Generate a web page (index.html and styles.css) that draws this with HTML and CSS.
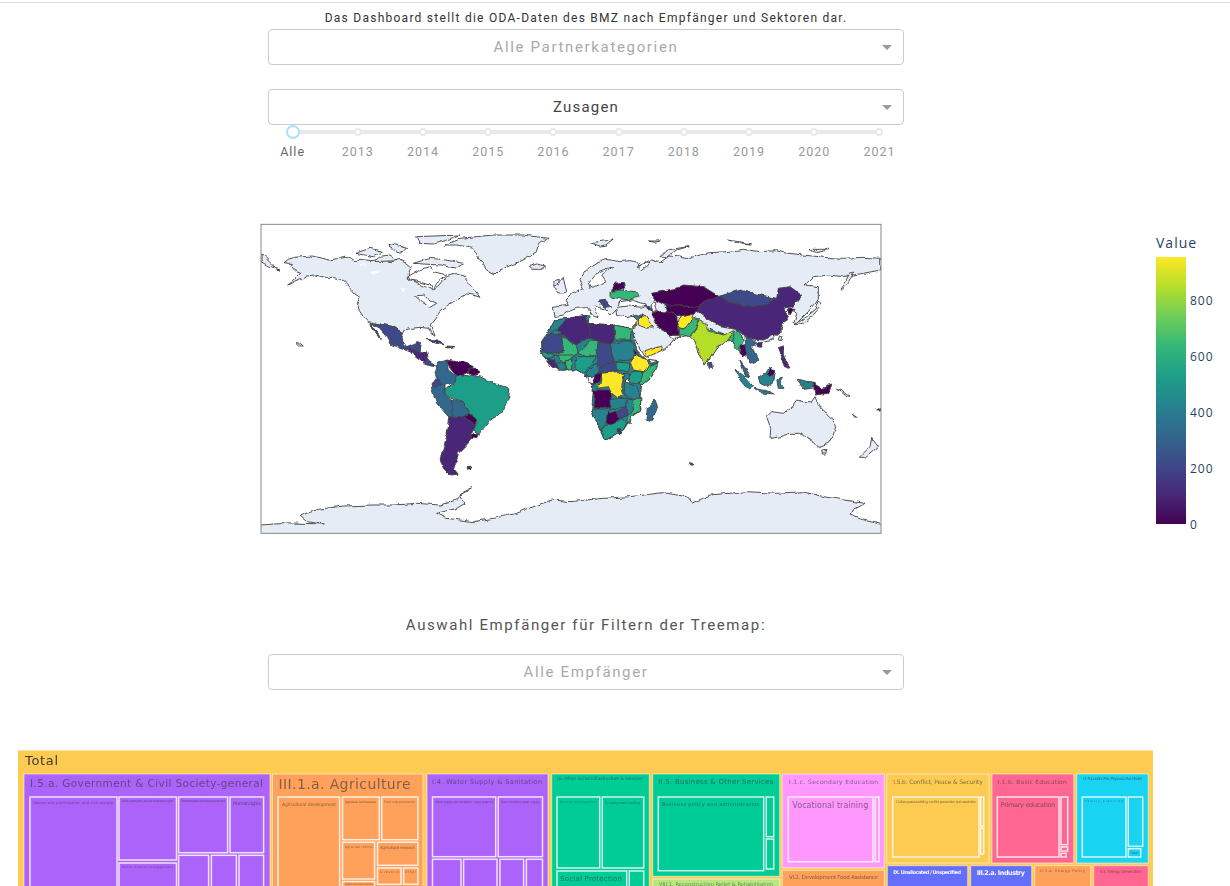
FILE: index.html
```html
<!DOCTYPE html>
<html>
<head>
    <title>ODA Dashboard</title>
    <link rel="stylesheet" href="styles.css">
</head>
<body>
    <div class="topline"></div>

    <div class="controls">
        <p class="intro">Das Dashboard stellt die ODA-Daten des BMZ nach Empfänger und Sektoren dar.</p>
        <div class="dropdown placeholder">Alle Partnerkategorien<span class="arrow"></span></div>
        <div class="dropdown">Zusagen<span class="arrow"></span></div>
    </div>

    <div class="slider">
        <div class="track"></div>
        <div class="mark active"><span class="dot"></span>Alle</div>
        <div class="mark"><span class="dot"></span>2013</div>
        <div class="mark"><span class="dot"></span>2014</div>
        <div class="mark"><span class="dot"></span>2015</div>
        <div class="mark"><span class="dot"></span>2016</div>
        <div class="mark"><span class="dot"></span>2017</div>
        <div class="mark"><span class="dot"></span>2018</div>
        <div class="mark"><span class="dot"></span>2019</div>
        <div class="mark"><span class="dot"></span>2020</div>
        <div class="mark"><span class="dot"></span>2021</div>
    </div>

    <div class="graph">
        <svg class="map" width="630" height="320" viewBox="0 0 1890 960">
            <defs>
                <clipPath id="frame"><rect x="3" y="13" width="1860" height="927"/></clipPath>
                <!-- roughens the hand drawn outlines into coastlines -->
                <filter id="coast" x="0" y="0" width="100%" height="100%" filterUnits="objectBoundingBox">
                    <feTurbulence type="fractalNoise" baseFrequency="0.04" numOctaves="3" seed="4"/>
                    <feDisplacementMap in="SourceGraphic" scale="13" xChannelSelector="R" yChannelSelector="G"/>
                    <feGaussianBlur stdDeviation="0.8"/>
                </filter>
            </defs>
            <g clip-path="url(#frame)">
            <g filter="url(#coast)">
                <rect class="sea-flat" x="0" y="0" width="1890" height="960"/>
                <!-- Eurasia, Australia and islands -->
                <g transform="translate(930 0)">
                    <polygon class="land" points="-45,290 -50,262 -5,256 -15,240 5,220 40,205 30,178 45,155 60,140 85,125 110,118 150,125 180,122 210,128 200,140 235,125 245,120 270,128 300,105 330,108 360,115 390,105 420,98 470,95 520,88 570,95 620,92 640,98 700,105 760,112 820,115 880,112 932,115 932,150 880,160 820,170 775,165 730,170 705,195 745,200 745,235 730,255 715,275 680,310 672,310 680,280 660,265 640,290 635,330 605,360 570,370 545,378 520,380 480,340 460,370 435,385 415,420 405,435 385,390 375,365 360,345 335,350 310,360 290,385 255,395 225,410 205,375 190,345 185,320 215,290 200,283 170,290 140,287 138,268 120,285 105,270 80,255 75,262 85,290 70,285 50,260 20,262 0,270 -20,285"/>
                    <polygon class="sea" points="140,262 150,245 185,240 225,252 222,262 175,258"/>
                    <polygon class="sea" points="243,255 255,245 262,275 248,278"/>
                    <polygon class="sea" points="55,190 85,155 125,140 95,165 110,185 90,192 60,205"/>
                    <polygon class="sea" points="205,140 240,125 230,140 215,150"/>
                    <polygon class="sea" points="262,322 285,335 312,358 330,348 300,345 270,318"/>
                    <polygon class="land" points="590,590 605,575 640,580 665,560 680,540 700,545 725,545 735,530 745,555 760,570 785,595 797,620 790,645 775,670 745,680 725,660 710,650 685,640 660,640 630,650 600,655 602,625"/>
                    <polygon class="land" points="755,690 770,688 767,702 757,702"/>
                    <polygon class="land" points="905,655 925,680 885,715 865,715 900,680"/>
                    <polygon class="land" points="810,210 840,160 852,155 835,190"/>
                    <polygon class="land" points="675,315 710,290 735,270 745,240 755,255 730,285 700,310"/>
                    <polygon class="land" points="60,68 130,60 110,75 90,78"/>
                    <polygon class="land" points="235,60 268,60 250,64"/>
                    <polygon class="land" points="270,110 290,90 355,80 320,90 290,110"/>
                    <polygon class="land" points="475,60 545,72 500,68"/>
                    <polygon class="land" points="715,88 780,88 740,98"/>
                    <polygon class="v0" points="125,212 135,190 160,187 165,205 150,210"/>
                    <polygon class="v6" points="120,215 150,210 200,215 210,230 175,240 140,235 120,230"/>
                    <polygon class="v2" points="85,240 105,238 125,262 105,265"/>
                    <polygon class="v0" points="245,220 320,205 340,195 400,200 445,228 430,240 395,250 370,262 330,255 285,255 255,240"/>
                    <polygon class="v2" points="450,228 510,210 550,220 620,235 590,255 535,260 470,245"/>
                    <polygon class="v1" points="395,250 450,228 470,245 535,260 590,255 620,235 625,205 660,200 695,225 665,260 640,265 655,290 635,320 625,340 580,360 530,355 510,330 450,320 410,295 370,265"/>
                    <polygon class="v0" points="655,265 672,265 660,285"/>
                    <polygon class="v0" points="285,255 330,255 370,262 395,250 370,285 340,295 320,285 290,275"/>
                    <polygon class="v1" points="225,255 243,262 248,272 230,268"/>
                    <polygon class="v0" points="245,285 265,275 290,275 320,285 325,345 300,345 265,320"/>
                    <polygon class="v9" points="320,310 335,290 370,282 365,300 345,325 325,320"/>
                    <polygon class="v6" points="325,345 325,320 345,325 370,295 385,300 375,335 360,350 340,345"/>
                    <polygon class="v6" points="470,345 497,335 505,385 485,365 475,365"/>
                    <polygon class="v8" points="385,298 410,310 415,330 460,345 475,340 495,330 470,365 440,380 415,420 405,435 385,390 375,365 360,350 375,335"/>
                    <polygon class="v6" points="420,325 462,342 430,338"/>
                    <polygon class="v6" points="495,335 510,330 520,365 510,380 515,400 500,385 485,365"/>
                    <polygon class="v0" points="510,375 530,375 540,400 520,410 510,400"/>
                    <polygon class="v3" points="525,350 560,365 545,380 565,420 540,430 530,395"/>
                    <polygon class="v3" points="510,420 525,440 540,470 525,465"/>
                    <polygon class="v2" points="415,428 425,430 427,445 417,445"/>
                    <polygon class="v1" points="560,368 578,368 572,382 562,380"/>
                    <polygon class="v1" points="625,385 640,380 640,400 650,430 657,445 640,440 635,410"/>
                    <polygon class="land" points="628,345 636,348 632,362 625,360"/>
                    <polygon class="v4" points="495,448 525,470 550,500 535,510 510,480"/>
                    <polygon class="v4" points="550,505 590,512 612,522 570,518"/>
                    <polygon class="v4" points="565,470 600,445 615,460 610,490 590,500 570,490"/>
                    <polygon class="v0" points="590,460 605,445 617,458 600,470"/>
                    <polygon class="v4" points="620,480 640,475 632,490 642,505 625,505"/>
                    <polygon class="v4" points="680,480 730,490 735,500 700,505"/>
                    <polygon class="v0" points="730,490 755,505 785,495 775,520 735,525"/>
                    <polygon class="land" points="800,505 815,510 842,530 825,525"/>
                    <polygon class="land" points="850,580 865,590 860,592"/>
                    <polygon class="v2" points="920,570 932,562 932,570"/>
                    <polygon class="v3" points="255,540 263,560 245,605 228,600 232,565"/>
                    <polygon class="v2" points="358,728 368,730 366,736 358,734"/>
                </g>

                <!-- Africa, Arabia and the British Isles -->
                <g transform="translate(810 150)">
                    <polygon class="land" points="75,50 100,25 110,65 100,70 82,68"/>
                    <polygon class="land" points="72,32 88,28 84,46 72,46"/>
                    <polygon class="v4" points="75,150 115,145 170,135 180,135 178,160 250,165 305,175 320,240 350,270 385,272 365,320 335,345 330,385 333,420 305,440 290,465 280,480 250,500 222,507 210,480 185,420 190,360 170,320 160,310 140,300 85,300 65,290 35,250 35,215 55,185"/>
                    <polygon class="v4" points="35,215 55,185 75,150 115,145 80,180 60,190"/>
                    <polygon class="v1" points="80,180 115,145 170,135 175,165 180,200 140,225 95,195"/>
                    <polygon class="v5" points="165,135 180,135 175,160"/>
                    <polygon class="v1" points="175,160 250,165 252,210 240,222 180,205"/>
                    <polygon class="v6" points="252,165 305,175 300,210 255,210"/>
                    <polygon class="v2" points="35,215 60,190 95,195 100,245 60,250 42,245"/>
                    <polygon class="v6" points="95,200 140,228 145,250 110,265 75,255 100,245"/>
                    <polygon class="v6" points="145,250 180,210 205,212 200,255 170,260"/>
                    <polygon class="v2" points="205,212 240,222 250,270 235,300 205,290 198,255"/>
                    <polygon class="v4" points="240,220 305,212 320,240 300,270 250,275"/>
                    <polygon class="v5" points="35,245 60,250 75,255 60,262 40,260"/>
                    <polygon class="v1" points="45,262 75,272 85,300 65,290"/>
                    <polygon class="v6" points="85,255 135,255 110,275 90,272"/>
                    <polygon class="v4" points="80,280 105,275 105,300 85,300"/>
                    <polygon class="v6" points="107,272 125,270 125,298 107,298"/>
                    <polygon class="v5" points="135,260 195,260 185,290 160,310 140,300"/>
                    <polygon class="v4" points="170,310 200,280 205,300 200,320 170,318"/>
                    <polygon class="v2" points="205,295 250,275 265,300 230,310 205,315"/>
                    <polygon class="v5" points="250,275 300,280 295,305 262,300"/>
                    <polygon class="v0" points="310,240 325,250 316,256"/>
                    <polygon class="v9" points="300,275 320,250 350,270 365,290 340,305 310,300"/>
                    <polygon class="v6" points="365,285 385,275 365,320 335,345 325,330 340,305"/>
                    <polygon class="land" points="355,268 385,272 365,280"/>
                    <polygon class="v5" points="305,305 340,305 330,340 300,335 295,320"/>
                    <polygon class="v4" points="280,310 300,310 295,330 280,330"/>
                    <polygon class="v9" points="215,310 265,305 280,315 272,350 280,375 265,385 245,370 235,350 200,355 215,335"/>
                    <polygon class="sea" points="288,328 298,326 298,342 288,342"/>
                    <polygon class="land" points="170,320 195,318 190,345 175,340"/>
                    <polygon class="v0" points="195,310 215,310 210,335 185,350 190,345"/>
                    <polygon class="v4" points="280,335 320,345 330,385 295,385 280,365"/>
                    <polygon class="v0" points="190,360 235,360 245,370 240,410 190,415 195,390"/>
                    <polygon class="v4" points="240,390 265,385 295,385 285,410 255,418 240,415"/>
                    <polygon class="v6" points="305,385 333,385 330,420 305,440 300,465 290,450 310,420"/>
                    <polygon class="v2" points="260,425 290,410 295,435 275,445"/>
                    <polygon class="v4" points="185,420 240,415 230,440 228,465 210,480"/>
                    <polygon class="v0" points="232,430 260,425 270,445 245,465 228,460"/>
                    <polygon class="v5" points="212,482 230,462 250,465 275,445 290,460 280,480 250,500 222,507"/>
                    <polygon class="v1" points="262,476 272,476 272,486 262,486"/>
                    <polygon class="v9" points="345,245 395,228 398,240 350,262"/>
                    <polygon class="v9" points="325,150 345,135 370,170 350,175 325,165"/>
                    <polygon class="v9" points="305,170 318,160 315,175"/>
                    <polygon class="v4" points="310,135 340,135 320,150"/>
                </g>

                <!-- America, Greenland, Antarctica -->
                <polygon class="land" points="72,128 85,118 100,112 130,110 160,108 185,115 210,120 235,115 260,112 285,122 300,118 335,122 360,118 395,125 420,118 440,128 455,140 445,160 445,175 520,212 540,195 560,170 590,160 610,165 625,185 640,205 660,232 640,225 620,222 600,235 580,245 565,255 545,270 535,285 525,300 510,318 518,330 525,348 512,340 505,325 480,322 455,325 435,330 430,342 400,320 360,312 325,305 310,290 298,272 292,250 300,232 285,222 270,205 255,190 240,178 220,172 195,172 165,165 140,168 125,178 100,188 80,195 110,175 125,160 105,152 95,140 100,130 85,130"/>
                <polygon class="sea" points="445,170 480,150 510,140 520,155 560,165 530,190 520,212 510,195 480,185 450,180"/>
                <polygon class="land" points="460,130 510,115 560,120 610,130 590,145 540,135"/>
                <polygon class="land" points="285,100 330,85 370,95 340,110"/>
                <polygon class="land" points="390,70 440,85 420,100 395,85"/>
                <polygon class="land" points="470,50 600,45 560,60 520,72 480,70"/>
                <polygon class="land" points="345,125 410,122 390,108 360,112"/>
                <polygon class="land" points="600,55 700,45 790,45 865,55 835,70 830,95 790,120 720,150 705,165 680,150 660,120 640,85 590,75 555,75"/>
                <polygon class="land" points="808,140 830,132 860,138 845,148 815,148"/>
                <polygon class="land" points="3,105 15,112 50,148 60,150 20,135 3,125"/>
                <polygon class="land" points="108,365 115,366 130,378 122,378"/>
                <polygon class="sea" points="465,228 490,225 510,240 530,250 510,262 485,245"/>
                <polygon class="sea-flat" points="300,132 325,135 300,138"/>
                <polygon class="sea-flat" points="330,155 365,150 340,162"/>
                <polygon class="sea-flat" points="420,200 435,210 428,214"/>
                <polygon class="v2" points="330,308 360,312 400,320 430,340 425,360 440,380 475,365 485,368 480,395 450,395 420,385 390,372 375,345 350,318"/>
                <polygon class="v2" points="330,310 345,330 365,358 350,345 335,325"/>
                <polygon class="v1" points="440,385 470,395 500,395 505,420 490,428 465,410"/>
                <polygon class="v2" points="490,428 505,420 530,437 510,435"/>
                <polygon class="v1" points="498,358 530,360 555,375 520,368"/>
                <polygon class="v1" points="560,378 585,380 560,384"/>
                <polygon class="v3" points="535,430 560,420 565,450 590,470 580,490 555,495 545,500 530,475 525,460"/>
                <polygon class="v0" points="560,420 590,425 610,425 640,440 630,455 610,465 590,470 570,445"/>
                <polygon class="v0" points="625,445 650,445 660,460 640,470 625,460"/>
                <polygon class="v2" points="515,485 530,475 545,490 525,505 513,495"/>
                <polygon class="v3" points="513,500 525,505 545,490 555,495 555,520 575,540 575,565 580,590 565,590 530,550"/>
                <polygon class="v5" points="555,510 580,490 590,470 610,465 640,470 660,470 680,480 710,490 750,510 745,535 725,580 690,600 670,625 655,640 640,630 650,610 630,580 610,545 575,535 555,520"/>
                <polygon class="v3" points="575,540 610,545 630,580 610,590 580,590 575,565"/>
                <polygon class="v0" points="610,590 630,580 650,600 645,620 625,600"/>
                <polygon class="v0" points="635,640 655,640 650,655 637,655"/>
                <polygon class="v1" points="570,590 610,590 625,600 645,620 635,640 637,655 615,680 595,700 590,725 580,745 595,763 570,765 550,745 540,715 555,670 565,620"/>
                <polygon class="v1" points="618,743 635,741 632,747 620,747"/>
                <polygon class="land" points="3,912 60,908 190,912 140,905 120,888 175,868 250,858 340,855 400,855 470,850 540,855 590,840 610,815 635,803 600,825 615,850 590,865 530,880 560,895 640,905 700,895 770,880 830,855 880,840 930,845 1030,835 1110,830 1210,818 1280,830 1295,850 1350,825 1460,815 1550,820 1630,815 1690,830 1815,850 1780,870 1770,885 1810,900 1875,915 1875,960 -10,960 -10,912"/>
            </g>
            </g>
            <rect class="frame" x="3" y="13" width="1860" height="927"/>
        </svg>

        <div class="colorbar">
            <div class="colorbar-title">Value</div>
            <div class="colorbar-body">
                <div class="colorbar-ramp"></div>
                <div class="colorbar-ticks">
                    <span>800</span><span>600</span><span>400</span><span>200</span><span>0</span>
                </div>
            </div>
        </div>
    </div>

    <div class="controls lower">
        <p class="filter-label">Auswahl Empfänger für Filtern der Treemap:</p>
        <div class="dropdown placeholder">Alle Empfänger<span class="arrow"></span></div>
    </div>

    <svg class="treemap" width="1136" height="136" viewBox="18 750 1136 136">
        <g class="yellow">
            <rect x="18" y="750.500" width="1135" height="140"/>
            <text class="root" x="25" y="765" font-size="13" textLength="33">Total</text>
        </g>

        <g class="purple">
            <rect class="p" x="24" y="774" width="246" height="120"/>
            <rect class="c" x="30" y="797" width="87" height="100"/>
            <rect class="c" x="119" y="797" width="57.500" height="63"/>
            <rect class="c" x="119" y="863" width="57.500" height="30"/>
            <rect class="c" x="178.600" y="797" width="49" height="55.700"/>
            <rect class="c" x="230" y="797" width="33.600" height="55.700"/>
            <rect class="c" x="178.600" y="855.300" width="30" height="40"/>
            <rect class="c" x="211.400" y="855.300" width="25" height="40"/>
            <rect class="c" x="239" y="855.300" width="24.600" height="40"/>
            <text x="30" y="787" font-size="10.500" textLength="233">I.5.a. Government &amp; Civil Society-general</text>
            <text x="33" y="803.500" font-size="3.500" textLength="80">Democratic participation and civil society</text>
            <text x="122" y="802" font-size="3" textLength="51">Public sector policy and administrative mgmt</text>
            <text x="181" y="802" font-size="3" textLength="44">Decentralisation and local government</text>
            <text x="233" y="805" font-size="5" textLength="28">Human rights</text>
            <text x="122" y="868" font-size="3" textLength="51">Public finance management</text>

            <rect class="p" x="427" y="774" width="121" height="120"/>
            <rect class="c" x="432.500" y="797" width="63.200" height="59.700"/>
            <rect class="c" x="498.200" y="797" width="44.300" height="59.700"/>
            <rect class="c" x="432.500" y="859.300" width="28.500" height="40"/>
            <rect class="c" x="463.600" y="859.300" width="33.400" height="40"/>
            <rect class="c" x="500" y="859.300" width="23.600" height="40"/>
            <rect class="c" x="526.400" y="859.300" width="16.100" height="40"/>
            <text x="432" y="783.500" font-size="6.500" textLength="110">I.4. Water Supply &amp; Sanitation</text>
            <text x="435" y="803" font-size="3" textLength="58">Water supply and sanitation - large systems</text>
            <text x="501" y="803" font-size="3" textLength="39">Basic drinking water supply</text>
        </g>

        <g class="orange">
            <rect class="p" x="272.500" y="774" width="150.500" height="120"/>
            <rect class="c" x="278" y="797" width="61.600" height="100"/>
            <rect class="c" x="342.500" y="797" width="36.800" height="42.700"/>
            <rect class="c" x="381.800" y="797" width="36.100" height="42.700"/>
            <rect class="c" x="342.500" y="842.300" width="32.100" height="36.700"/>
            <rect class="c" x="377.500" y="842.300" width="40.400" height="23"/>
            <rect class="c" x="377.500" y="868" width="23.500" height="16.300"/>
            <rect class="c" x="403.600" y="868" width="14.300" height="16.300"/>
            <rect class="c" x="342.500" y="881.600" width="32.100" height="10"/>
            <rect class="c" x="377.500" y="887" width="40.400" height="10"/>
            <text x="278.500" y="789" font-size="14" textLength="132">III.1.a. Agriculture</text>
            <text x="282" y="805.500" font-size="4.500" textLength="54">Agricultural development</text>
            <text x="345" y="803" font-size="3" textLength="31">Agricultural land resources</text>
            <text x="384" y="803" font-size="3" textLength="31">Food crop production</text>
            <text x="345" y="848" font-size="3" textLength="28">Agrarian reform</text>
            <text x="380" y="848.500" font-size="4" textLength="35">Agricultural research</text>
            <text x="380" y="873" font-size="3" textLength="19">Livestock</text>
            <text x="405" y="873" font-size="3" textLength="11">Other</text>
            <text x="345" y="885" font-size="3" textLength="28">Agricultural inputs</text>

            <rect class="p" x="782.300" y="870.300" width="102" height="20"/>
            <text x="789" y="879" font-size="5.500" textLength="89">VI.2. Development Food Assistance</text>

            <rect class="p" x="1034.700" y="865.700" width="56" height="25"/>
            <text x="1040" y="872" font-size="3.500" textLength="45">II.3.a. Energy Policy</text>
        </g>

        <g class="green">
            <rect class="p" x="551.700" y="774" width="97.600" height="120"/>
            <rect class="c" x="557" y="797" width="42.700" height="71"/>
            <rect class="c" x="602.300" y="797" width="41.400" height="71"/>
            <rect class="c" x="557" y="871" width="69.700" height="20"/>
            <rect class="c" x="629.300" y="871" width="14.400" height="20"/>
            <text x="556.700" y="780" font-size="4.500" textLength="86">I.6. Other Social Infrastructure &amp; Services</text>
            <text x="560" y="803" font-size="3" textLength="36">Social mitigation</text>
            <text x="605" y="803.500" font-size="3.500" textLength="35">Employment policy</text>
            <text x="560" y="881" font-size="7" textLength="62">Social Protection</text>

            <rect class="p" x="652.700" y="774" width="127" height="102.300"/>
            <rect class="c" x="658.300" y="797" width="105.400" height="73.700"/>
            <rect class="c" x="766.300" y="797" width="7.400" height="39.700"/>
            <rect class="c" x="766.300" y="839" width="7.400" height="30"/>
            <text x="658.300" y="784" font-size="7" textLength="115">II.5. Business &amp; Other Services</text>
            <text x="661.700" y="806" font-size="5" textLength="98">Business policy and administration</text>
        </g>

        <g class="lime">
            <rect class="p" x="652.700" y="879" width="127" height="15"/>
            <text x="659" y="885.500" font-size="5" textLength="114">VIII.1. Reconstruction Relief &amp; Rehabilitation</text>
        </g>

        <g class="pink">
            <rect class="p" x="782.300" y="774" width="102" height="93.700"/>
            <rect class="c" x="788.300" y="797" width="84.700" height="64.700"/>
            <rect class="c" x="875.300" y="797" width="3.700" height="64.700"/>
            <text x="789" y="784" font-size="6" textLength="89">I.1.c. Secondary Education</text>
            <text x="792.300" y="808" font-size="8" textLength="76">Vocational training</text>
        </g>

        <g class="yellow">
            <rect class="p" x="886.700" y="774" width="102.300" height="89"/>
            <rect class="c" x="892.700" y="797" width="86.300" height="60"/>
            <rect class="c" x="980.700" y="797" width="3" height="29"/>
            <rect class="c" x="980.700" y="828" width="3" height="26"/>
            <text x="893.300" y="783.500" font-size="6" textLength="89.500">I.5.b. Conflict, Peace &amp; Security</text>
            <text x="896" y="803" font-size="3.500" textLength="80">Civilian peace-building, conflict prevention and resolution</text>
        </g>

        <g class="rose">
            <rect class="p" x="992" y="774" width="81.700" height="89"/>
            <rect class="c" x="997.300" y="797" width="61.700" height="60"/>
            <rect class="c" x="1061" y="797" width="6.700" height="47.700"/>
            <rect class="c" x="1061" y="847" width="6.700" height="4"/>
            <rect class="c" x="1061" y="853.300" width="5" height="3.700"/>
            <text x="997.700" y="783.500" font-size="6" textLength="69">I.1.b. Basic Education</text>
            <text x="1000.700" y="807" font-size="6.500" textLength="54.500">Primary education</text>

            <rect class="p" x="1093.700" y="865.700" width="54.600" height="25"/>
            <text x="1100" y="872.500" font-size="4" textLength="41.700">II.3. Energy Generation</text>
        </g>

        <g class="cyan">
            <rect class="p" x="1076.700" y="774" width="71.600" height="89"/>
            <rect class="c" x="1082.300" y="797" width="43.700" height="60"/>
            <rect class="c" x="1128.300" y="797" width="14.400" height="49.300"/>
            <rect class="c" x="1128.300" y="848.700" width="12.400" height="8.300"/>
            <text x="1082.700" y="780" font-size="4" textLength="59.500">I.3. Population Pol. / Reproductive Health</text>
            <text x="1085" y="802" font-size="3" textLength="38">Family planning</text>
            <text x="1130.500" y="853.500" font-size="3" textLength="8">Other</text>
        </g>

        <g class="blue">
            <rect class="p" x="887.300" y="865.700" width="80.400" height="25"/>
            <rect class="p" x="970.700" y="865.700" width="61" height="25"/>
            <text class="bright" x="893.300" y="873.500" font-size="5" font-weight="700" textLength="67.700">IX. Unallocated / Unspecified</text>
            <text class="bright" x="976.700" y="874.500" font-size="6.500" font-weight="700" textLength="48.300">III.2.a. Industry</text>
        </g>
    </svg>
</body>
</html>
```

FILE: styles.css
```css
html {
    overflow: hidden;
}

body {
    margin: 0;
    padding: 0;
    background: white;
    font-family: Roboto, "Liberation Sans", sans-serif;
    color: #444;
}

.topline {
    height: 2px;
    border-bottom: 1px solid #ddd;
}

.controls {
    width: 636px;
    margin-left: 268px;
}

.intro {
    margin: 0;
    height: 26px;
    line-height: 30px;
    text-align: center;
    font-size: 12px;
    letter-spacing: 1.260px;
    color: #333;
}

.dropdown {
    position: relative;
    height: 34px;
    line-height: 34px;
    margin-bottom: 24px;
    border: 1px solid #ccc;
    border-radius: 4px;
    text-align: center;
    font-size: 15px;
    letter-spacing: 1.200px;
}

.dropdown.placeholder {
    color: #aaa;
    letter-spacing: 1.650px;
}

.arrow {
    position: absolute;
    top: 15px;
    right: 11px;
    border-top: 5px solid #999;
    border-left: 5px solid transparent;
    border-right: 5px solid transparent;
}

/* year slider */
.slider {
    position: relative;
    display: flex;
    width: 652px;
    margin: -24px 0 0 260px;
}

.track {
    position: absolute;
    top: 5px;
    left: 33px;
    right: 33px;
    height: 4px;
    background: #e9e9e9;
}

.mark {
    position: relative;
    flex: 1;
    display: flex;
    flex-direction: column;
    align-items: center;
    gap: 8px;
    padding-top: 3px;
    font-size: 12.500px;
    letter-spacing: 1px;
    color: #999;
}

.dot {
    width: 4px;
    height: 4px;
    border: 2px solid #e9e9e9;
    border-radius: 50%;
    background: white;
}

.mark.active {
    color: #666;
}

.mark.active .dot {
    width: 10px;
    height: 10px;
    margin: -3px 0;
    border-color: #abe2fb;
}

/* choropleth plus colour scale */
.graph {
    display: flex;
    align-items: flex-start;
    margin: 61px 0 0 260px;
}

.map {
    display: block;
    flex: none;
}

.land {
    fill: #e5ecf6;
}

.sea {
    fill: white;
}

.sea-flat {
    fill: white;
    stroke: none !important;
}

.map polygon {
    stroke: #444;
    stroke-width: 2.800;
    stroke-linejoin: round;
}

.frame {
    fill: none;
    stroke: #888;
    stroke-width: 3;
}

.v0 { fill: #440154; }
.v1 { fill: #482878; }
.v2 { fill: #3e4989; }
.v3 { fill: #31688e; }
.v4 { fill: #26828e; }
.v5 { fill: #1f9e89; }
.v6 { fill: #35b779; }
.v7 { fill: #6ece58; }
.v8 { fill: #b5de2b; }
.v9 { fill: #fde725; }

.colorbar {
    margin: 14px 0 0 266px;
    color: #2a3f5f;
    font-family: "Open Sans", sans-serif;
    letter-spacing: 1px;
}

.colorbar-title {
    height: 23px;
    font-size: 14px;
    line-height: 18px;
}

.colorbar-body {
    display: flex;
}

.colorbar-ramp {
    width: 30px;
    height: 267px;
    background: linear-gradient(to top, #440154, #482878, #3e4989, #31688e, #26828e, #1f9e89, #35b779, #6ece58, #b5de2b, #fde725);
}

.colorbar-ticks {
    display: flex;
    flex-direction: column;
    justify-content: space-between;
    height: 224px;
    margin: 44px 0 0 4px;
    font-size: 12px;
}

.colorbar-ticks span {
    height: 0;
    line-height: 0;
}

/* second filter */
.lower {
    margin-top: 74px;
}

.filter-label {
    margin: 0 0 18px;
    height: 22px;
    line-height: 22px;
    text-align: center;
    font-size: 15px;
    letter-spacing: 1.600px;
    color: #555;
}

/* treemap tiles */
.treemap {
    display: block;
    margin: 60px 0 0 18px;
}

.treemap text {
    font-family: "DejaVu Sans", sans-serif;
    fill: #333;
    opacity: 0.6;
}

.treemap text.root {
    opacity: 0.95;
}

.treemap text.bright {
    fill: white;
    opacity: 0.95;
}

.treemap .p {
    stroke: rgba(255, 255, 255, 0.55);
    stroke-width: 1;
}

.treemap .c {
    stroke: rgba(255, 255, 255, 0.82);
    stroke-width: 1.500;
}

.yellow { fill: #fecb52; }
.purple { fill: #ab63fa; }
.orange { fill: #ffa15a; }
.green { fill: #00cc96; }
.lime { fill: #b6e880; }
.pink { fill: #ff97ff; }
.rose { fill: #ff6692; }
.cyan { fill: #19d3f3; }
.blue { fill: #636efa; }
```
